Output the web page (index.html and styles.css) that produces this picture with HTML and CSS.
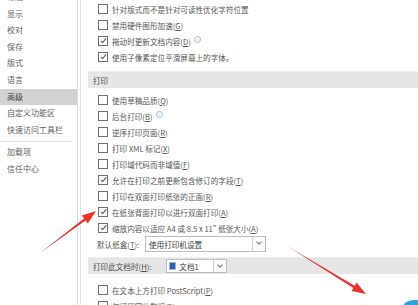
FILE: index.html
```html
<!DOCTYPE html>
<html lang="zh-CN">
<head>
  <meta charset="UTF-8">
  <title>Word 选项 - 高级</title>
  <link rel="stylesheet" href="styles.css">
</head>
<body>
  <!-- 左侧导航 -->
  <div class="sidebar">
    <ul class="nav">
      <li>常规</li>
      <li>显示</li>
      <li>校对</li>
      <li>保存</li>
      <li>版式</li>
      <li>语言</li>
      <li class="active">高级</li>
      <li>自定义功能区</li>
      <li>快速访问工具栏</li>
    </ul>
    <div class="nav-sep"></div>
    <ul class="nav">
      <li>加载项</li>
      <li>信任中心</li>
    </ul>
  </div>

  <!-- 右侧选项 -->
  <div class="main">
    <div class="row"><span class="box"></span>针对版式而不是针对可读性优化字符位置</div>
    <div class="row"><span class="box"></span>禁用硬件图形加速(<u>G</u>)</div>
    <div class="row"><span class="box checked"></span>拖动时更新文档内容(<u>D</u>)<span class="info">i</span></div>
    <div class="row"><span class="box checked"></span>使用子像素定位平滑屏幕上的字体。</div>

    <div class="section first">打印</div>

    <div class="row"><span class="box"></span>使用草稿品质(<u>Q</u>)</div>
    <div class="row"><span class="box"></span>后台打印(<u>B</u>)<span class="info">i</span></div>
    <div class="row"><span class="box"></span>逆序打印页面(<u>R</u>)</div>
    <div class="row"><span class="box"></span>打印 XML 标记(<u>X</u>)</div>
    <div class="row"><span class="box"></span>打印域代码而非域值(<u>F</u>)</div>
    <div class="row"><span class="box checked"></span>允许在打印之前更新包含修订的字段(<u>T</u>)</div>
    <div class="row"><span class="box"></span>打印在双面打印纸张的正面(<u>R</u>)</div>
    <div class="row"><span class="box checked"></span>在纸张背面打印以进行双面打印(<u>A</u>)</div>
    <div class="row"><span class="box checked"></span>缩放内容以适应 A4 或 8.5 x 11" 纸张大小(<u>A</u>)</div>
    <div class="row select-row">
      <span class="label">默认纸盒(<u>T</u>):</span>
      <div class="select wide"><span class="select-text">使用打印机设置</span><span class="arrow"></span></div>
    </div>

    <div class="section second">
      <span>打印此文档时(<u>H</u>):</span>
      <div class="select doc">
        <span class="doc-icon"></span><span class="select-text">文档1</span><span class="arrow"></span>
      </div>
    </div>

    <div class="row"><span class="box"></span>在文本上方打印 PostScript(<u>P</u>)</div>
    <div class="row"><span class="box"></span>仅打印窗体数据(<u>D</u>)</div>
  </div>

  <!-- 标注箭头 -->
  <svg class="marks" width="418" height="305" viewBox="0 0 418 305">
    <polygon fill="#e8342c" points="40,253 84.05,218.4 81.8,215.4 96,211 87.8,223.4 85.5,220.4"/>
    <polygon fill="#e8342c" points="287,246 354.7,285.7 356.6,282.5 366,294 351.4,291.1 353.3,287.9"/>
    <ellipse cx="416" cy="305" rx="12" ry="5" fill="#2aa6dc"/>
  </svg>
</body>
</html>
```

FILE: styles.css
```css
body {
  margin: 0;
  font-family: "Noto Sans CJK SC", "Noto Sans", sans-serif;
  color: #555;
  background: #fff;
  display: flex;
  height: 305px;
  overflow: hidden;
  position: relative;
}
u {
  text-decoration: underline;
}

/* 左侧导航 */
.sidebar {
  width: 77px;
  flex: none;
  border-right: 1px solid #dedede;
  font-size: 8px;
}
.nav {
  list-style: none;
  margin: 0;
  padding: 0;
}
.nav:first-child {
  margin-top: -11px;
}
.nav li {
  height: 16.6px;
  line-height: 16.6px;
  padding-left: 7px;
  color: #5e5e5e;
}
.nav li.active {
  background: #d2d2d2;
  color: #444;
}
.nav-sep {
  height: 1px;
  background: #e2e2e2;
  margin: 3px 5px 2px 0;
}

/* 右侧选项 */
.main {
  flex: 1;
  margin-left: 2px;
  border-left: 1px solid #e4e4e4;
  padding: 1px 0 0 17px;
  font-size: 7.6px;
}
.row {
  height: 16px;
  display: flex;
  align-items: center;
  white-space: nowrap;
}
.box {
  width: 8px;
  height: 8px;
  border: 1px solid #707070;
  background: #fff;
  margin-right: 4px;
  flex: none;
  position: relative;
}
.box.checked::after {
  content: "";
  position: absolute;
  left: 2.5px;
  top: 0px;
  width: 2px;
  height: 5px;
  border: solid #555;
  border-width: 0 1.1px 1.1px 0;
  transform: rotate(40deg);
}
.info {
  width: 5px;
  height: 5px;
  border: 1px solid #8fbde8;
  border-radius: 50%;
  color: #7fb0e0;
  font-size: 4px;
  line-height: 5px;
  text-align: center;
  margin-left: 3px;
  margin-top: -3px;
  font-family: "DejaVu Serif", serif;
}

.section {
  margin-left: -10px;
  padding-left: 5px;
  height: 16px;
  display: flex;
  align-items: center;
  background: #e6e6e6;
  border-top: 1px solid #eeeeee;
  color: #4a4a4a;
}
.section.first {
  margin-top: 6px;
  margin-bottom: 4px;
}
.section.second {
  margin-top: 5px;
  margin-bottom: 8px;
  gap: 15px;
}

.select-row {
  height: 16px;
}
.label {
  width: 48px;
  margin-left: -1px;
}
.select {
  border: 1px solid #bdbdbd;
  background: #fff;
  display: flex;
  align-items: center;
  box-sizing: border-box;
  height: 16px;
}
.select.wide {
  width: 121px;
}
.select.doc {
  width: 61px;
  height: 14px;
}
.select-text {
  flex: 1;
  padding-left: 3px;
  color: #3a3a3a;
}
.arrow {
  width: 12px;
  height: 100%;
  border-left: 1px solid #d0d0d0;
  position: relative;
  background: #fafafa;
}
.arrow::after {
  content: "";
  position: absolute;
  left: 4px;
  top: 3px;
  width: 3px;
  height: 3px;
  border: solid #777;
  border-width: 0 1px 1px 0;
  transform: rotate(45deg);
}
.doc-icon {
  width: 7px;
  height: 8px;
  margin-left: 2px;
  background: #2b5fb4;
  border: 1px solid #9bb8e4;
  box-sizing: border-box;
}

/* 标注 */
.marks {
  position: absolute;
  left: 0;
  top: 0;
  pointer-events: none;
}
```
